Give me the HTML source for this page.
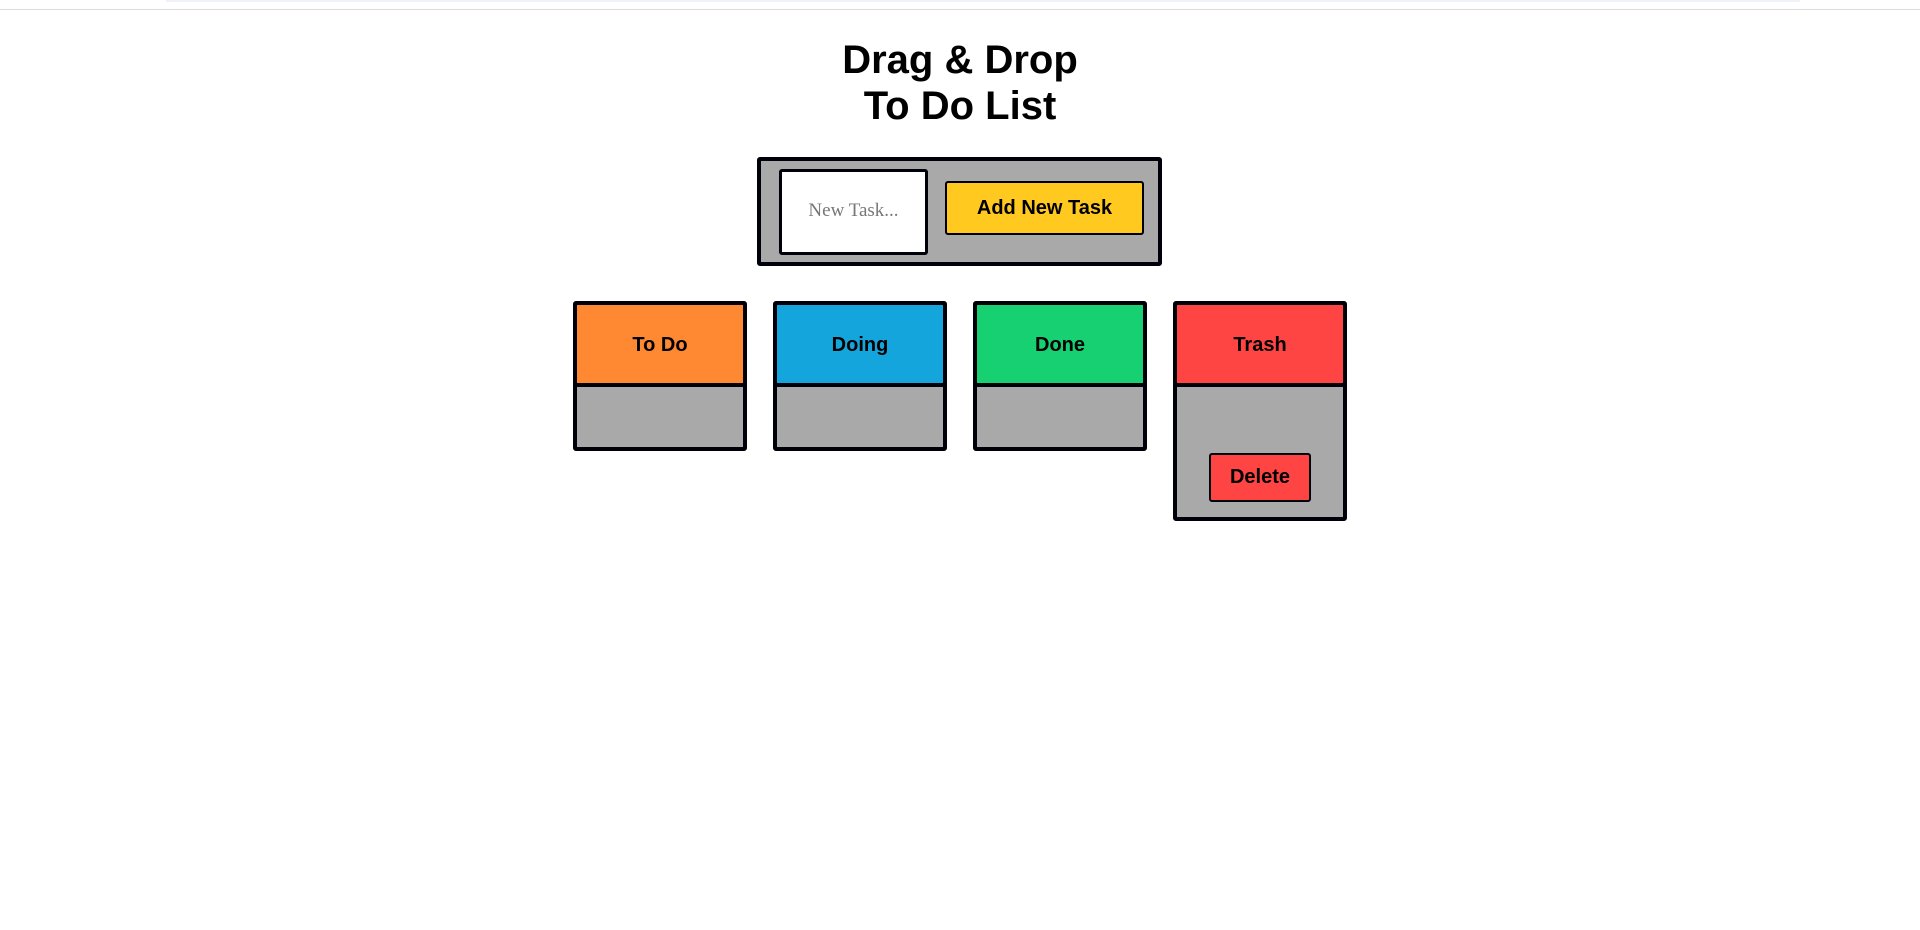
<!DOCTYPE html>
<html><head><meta charset="utf-8"><style>
*{box-sizing:border-box;margin:0;padding:0}
body{width:1920px;height:930px;background:#fff;position:relative;overflow:hidden;font-family:"Liberation Sans",Arial,sans-serif}
.topline{position:absolute;left:0;top:9px;width:1920px;height:1px;background:#dcdcdc}
.topbar{position:absolute;left:166px;top:0;width:1634px;height:2px;background:#eef2f8}
h1{position:absolute;left:0;top:37px;width:1920px;text-align:center;font-size:40px;line-height:46px;font-weight:bold;color:#000}
.form{position:absolute;left:757px;top:157px;width:405px;height:109px;background:#a9a9a9;border:4px solid #00000a;border-radius:3px}
.inp{position:absolute;left:779px;top:169px;width:149px;height:86px;background:#fff;border:3px solid #00000a;border-radius:3px;font-family:"Liberation Serif",serif;font-size:19px;color:#777;text-align:center;line-height:78px}
.btn{position:absolute;left:945px;top:181px;width:199px;height:54px;background:#ffc91f;border:2px solid #00000a;border-radius:3px;font-weight:bold;font-size:20px;text-align:center;line-height:50px}
.col{position:absolute;top:301px;width:174px;height:150px;background:#a9a9a9;border:4px solid #00000a;border-radius:3px}
.col .h{height:82px;border-bottom:4px solid #00000a;font-weight:bold;font-size:20px;text-align:center;line-height:80px}
.del{position:absolute;left:1209px;top:453px;width:102px;height:49px;background:#ff4444;border:2px solid #00000a;border-radius:3px;font-weight:bold;font-size:20px;text-align:center;line-height:45px}
</style></head><body>
<div class="topbar"></div><div class="topline"></div>
<h1>Drag &amp; Drop<br>To Do List</h1>
<div class="form"></div>
<div class="inp">New Task...</div>
<div class="btn">Add New Task</div>
<div class="col" style="left:573px"><div class="h" style="background:#ff8833">To Do</div></div>
<div class="col" style="left:773px"><div class="h" style="background:#13a5db">Doing</div></div>
<div class="col" style="left:973px"><div class="h" style="background:#17d071">Done</div></div>
<div class="col" style="left:1173px;height:220px"><div class="h" style="background:#ff4444">Trash</div></div>
<div class="del">Delete</div>
</body></html>
